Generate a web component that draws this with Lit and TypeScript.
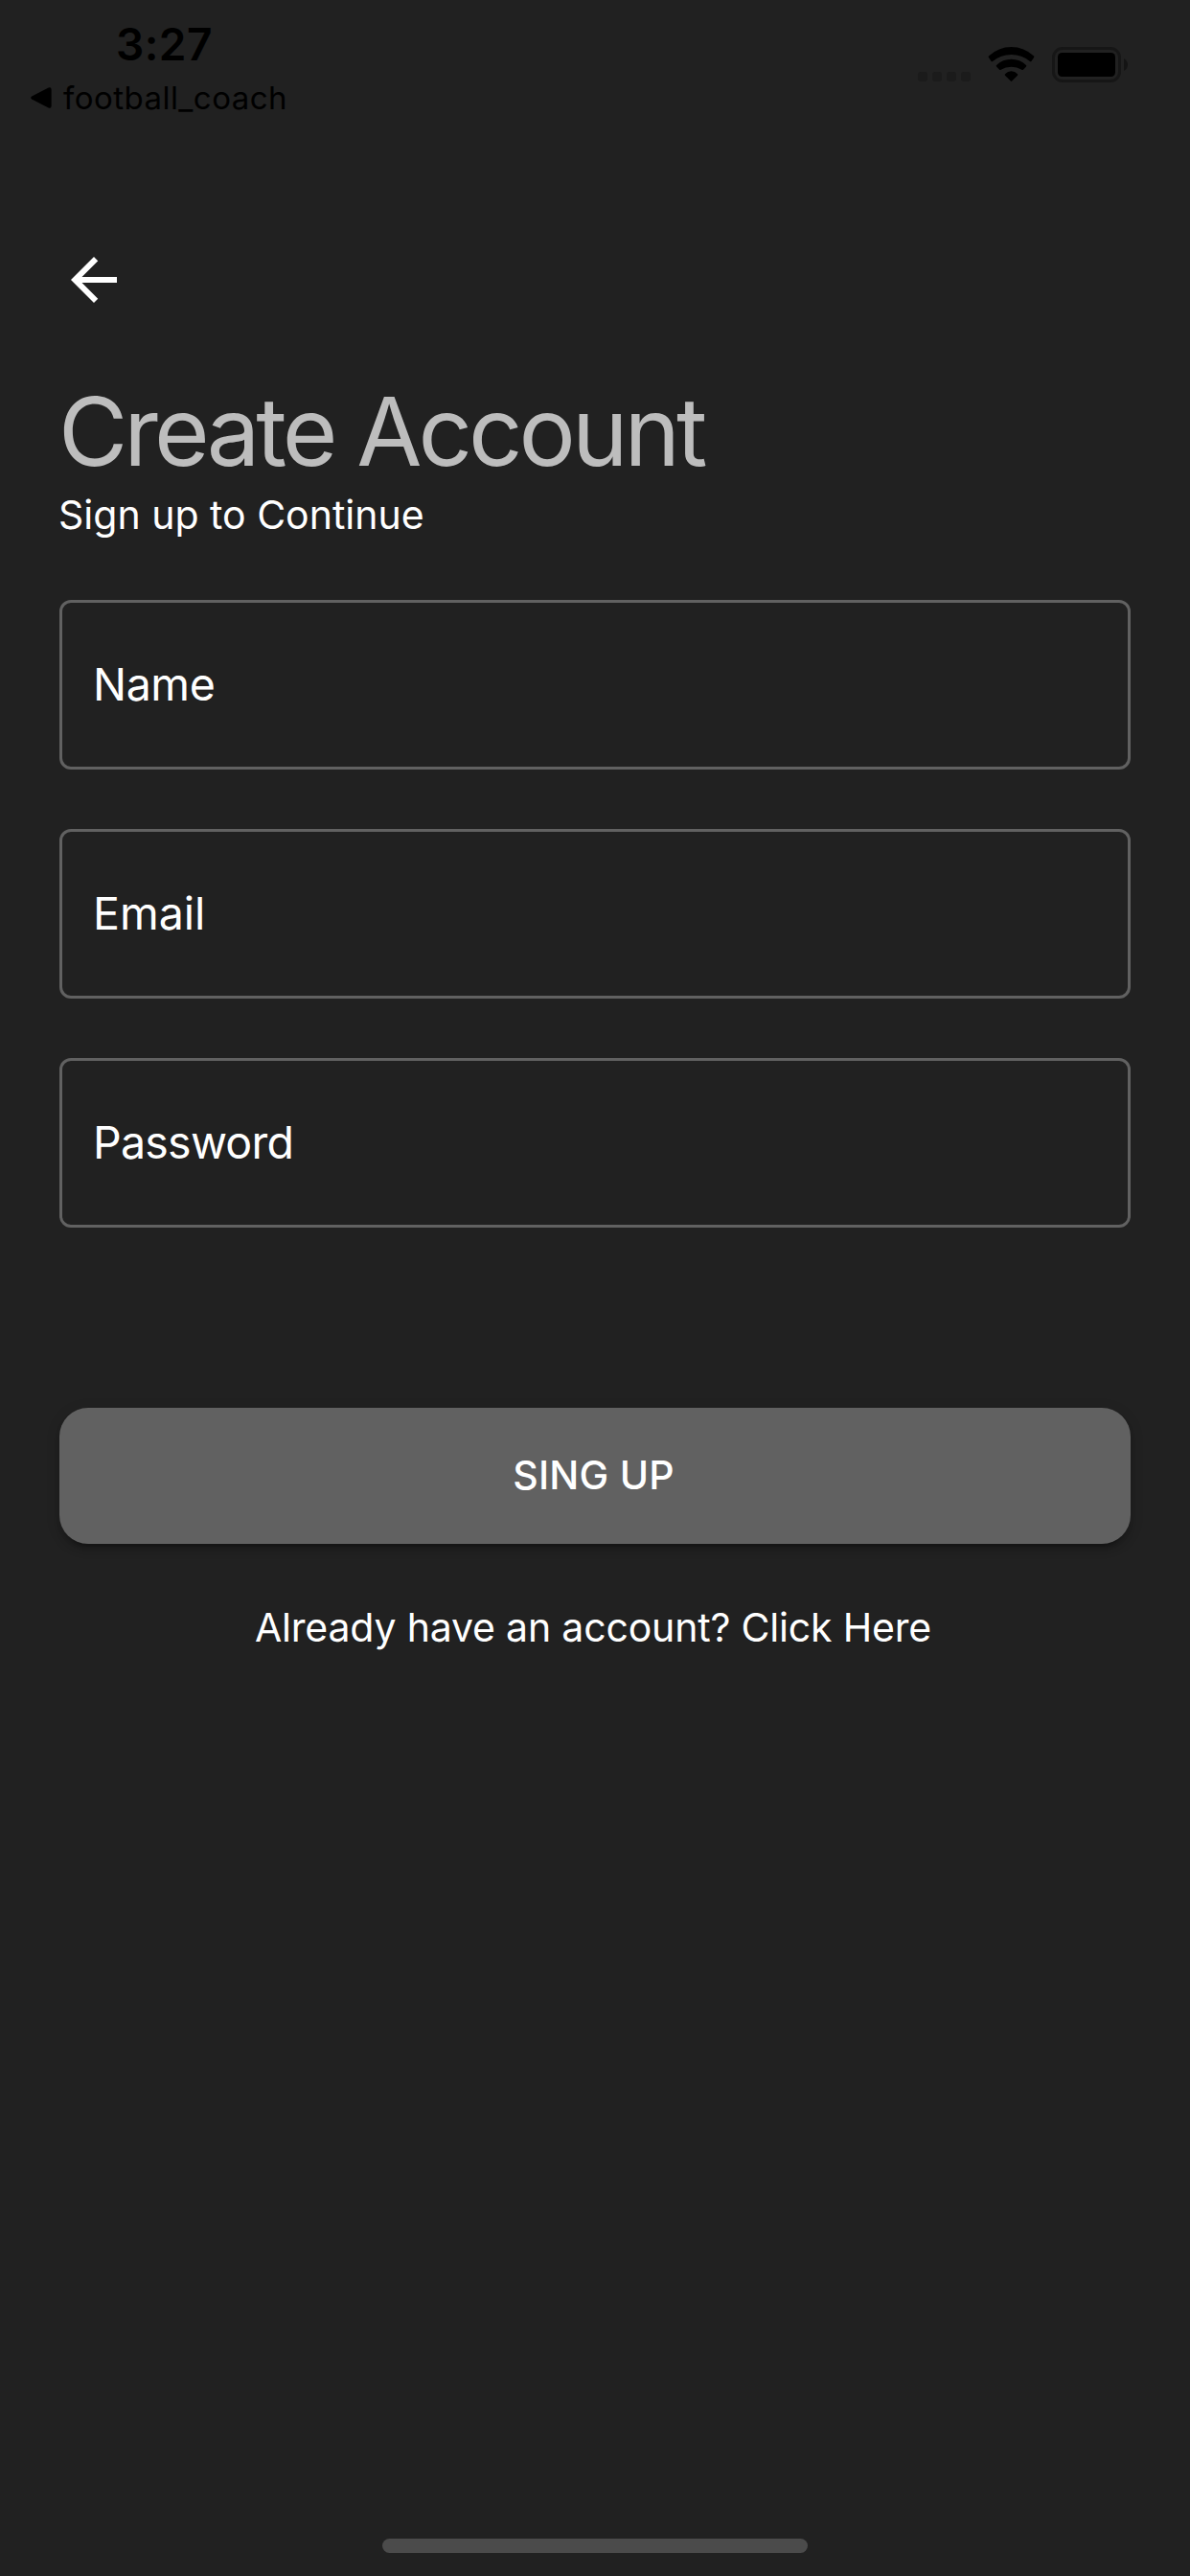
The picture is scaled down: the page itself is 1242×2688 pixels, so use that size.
import { LitElement, html, css, svg } from "lit";
import { customElement, property } from "lit/decorators.js";

@customElement("status-bar")
class StatusBar extends LitElement {
  static styles = css`
    :host {
      display: flex;
      justify-content: space-between;
      align-items: flex-start;
      box-sizing: border-box;
      height: 132px;
      padding: 18px 64px 0 32px;
      color: #000;
    }
    .left {
      display: flex;
      flex-direction: column;
      gap: 8px;
    }
    .time {
      margin-left: 89px;
      font-size: 46px;
      font-weight: 600;
      line-height: 56px;
      letter-spacing: 0.45px;
    }
    .crumb {
      display: flex;
      align-items: center;
      gap: 12px;
      font-size: 33px;
      font-weight: 400;
      line-height: 40px;
      letter-spacing: 0.46px;
    }
    svg {
      display: block;
    }
    .right {
      display: flex;
      align-items: flex-start;
      padding-top: 30px;
    }
    .dots {
      margin: 27px 18px 0 0;
    }
    .wifi {
      margin: 1px 18px 0 0;
    }
    .battery {
      margin-top: 1px;
    }
  `;
  render() {
    return html`
      <div class="left">
        <div class="time">3:27</div>
        <div class="crumb">
          <svg width="22" height="22" viewBox="0 0 22 22">
            <path d="M1.2 9.4 18.6 .6Q21.6-.6 21.6 2.6V19.4Q21.6 22.6 18.6 21.4L1.2 12.6Q-.8 11 1.2 9.4Z" />
          </svg>
          <span>football_coach</span>
        </div>
      </div>
      <div class="right">
        <svg class="dots" width="55" height="10" fill="#1b1b1b">
          ${[0, 15, 30, 45].map((x) => svg`<rect x=${x} width="10" height="10" rx="3.2" />`)}
        </svg>
        <svg class="wifi" width="49" height="37" viewBox="0 0 49 37">
          <path d="M.9 9.6Q.3 10.3 .9 11L3.6 14.9Q4.3 15.7 5.1 15Q13.5 8 24.5 8T43.9 15Q44.7 15.7 45.4 14.9L48.1 11Q48.7 10.3 48.1 9.6Q38 0 24.5 0T.9 9.6Z" />
          <path d="M9 19Q8.4 19.7 9 20.4L12.1 23.7Q12.8 24.4 13.6 23.8Q18.4 20.8 24.5 20.8T35.4 23.8Q36.2 24.4 36.9 23.7L40 20.4Q40.6 19.7 40 19Q33.5 12.7 24.5 12.7T9 19Z" />
          <path d="M18 28.3Q17.4 29 18 29.7L23.8 35.6Q24.5 36.3 25.2 35.6L31 29.7Q31.6 29 31 28.3Q28.3 25.3 24.5 25.3T18 28.3Z" />
        </svg>
        <svg class="battery" width="80" height="37" viewBox="0 0 80 37">
          <rect x="1.5" y="1.5" width="69" height="34" rx="9.5" fill="none" stroke="#161616" stroke-width="3" />
          <rect x="6" y="6" width="60" height="25" rx="4.5" />
          <path d="M75 12V25Q79 22.5 79 18.5T75 12Z" fill="#141414" />
        </svg>
      </div>
    `;
  }
}

@customElement("text-field")
class TextField extends LitElement {
  @property() label = "";
  static styles = css`
    :host {
      display: flex;
      align-items: center;
      box-sizing: border-box;
      height: 177px;
      padding: 0 32px 2px;
      border: 3px solid #616161;
      border-radius: 12px;
      color: #fff;
      font-size: 46.5px;
      line-height: 58px;
      letter-spacing: -0.4px;
    }
    :host([label="Email"]) {
      letter-spacing: 0;
    }
    :host([label="Password"]) {
      letter-spacing: -0.75px;
    }
  `;
  render() {
    return html`<span>${this.label}</span>`;
  }
}

@customElement("app-root")
class AppRoot extends LitElement {
  static styles = css`
    :host {
      display: flex;
      flex-direction: column;
      box-sizing: border-box;
      width: 100%;
      height: 2688px;
      background: #212121;
      color: #fff;
      font-family: Inter, "Liberation Sans", sans-serif;
    }
    main {
      display: flex;
      flex-direction: column;
      flex: 1;
      padding: 124px 62px 0;
    }
    .back {
      display: block;
      width: 72px;
      height: 72px;
      fill: #fff;
    }
    h1 {
      margin: 62px 0 0 -1px;
      font-size: 99px;
      font-weight: 420;
      line-height: 120px;
      letter-spacing: -4px;
      color: #bdbdbd;
      white-space: nowrap;
    }
    .sub {
      margin: 2px 0 0 -1px;
      font-size: 41px;
      line-height: 50px;
    }
    .fields {
      display: flex;
      flex-direction: column;
      gap: 62px;
      margin-top: 64px;
    }
    button {
      height: 142px;
      margin: 188px 0 0;
      padding: 0 3px 3px 0;
      border: 0;
      border-radius: 30px;
      background: #616161;
      color: #fff;
      font: 500 41px/50px Inter, "Liberation Sans", sans-serif;
      letter-spacing: 0.25px;
      box-shadow: 0 9px 3px -6px rgba(0, 0, 0, 0.2), 0 6px 6px rgba(0, 0, 0, 0.14), 0 3px 15px rgba(0, 0, 0, 0.12);
    }
    .login {
      margin-top: 62px;
      padding-right: 4px;
      text-align: center;
      font-size: 41px;
      line-height: 50px;
      letter-spacing: -0.18px;
    }
    .home {
      align-self: center;
      width: 444px;
      height: 15px;
      margin-bottom: 24px;
      border-radius: 8px;
      background: #4b4b4b;
    }
  `;
  render() {
    return html`
      <status-bar></status-bar>
      <main>
        <svg class="back" viewBox="0 0 24 24">
          <path d="M20 11H7.83l5.59-5.59L12 4l-8 8 8 8 1.41-1.41L7.83 13H20z" />
        </svg>
        <h1>Create Account</h1>
        <div class="sub">Sign up to Continue</div>
        <div class="fields">
          ${["Name", "Email", "Password"].map((l) => html`<text-field label=${l}></text-field>`)}
        </div>
        <button>SING UP</button>
        <div class="login">Already have an account? Click Here</div>
      </main>
      <div class="home"></div>
    `;
  }
}
